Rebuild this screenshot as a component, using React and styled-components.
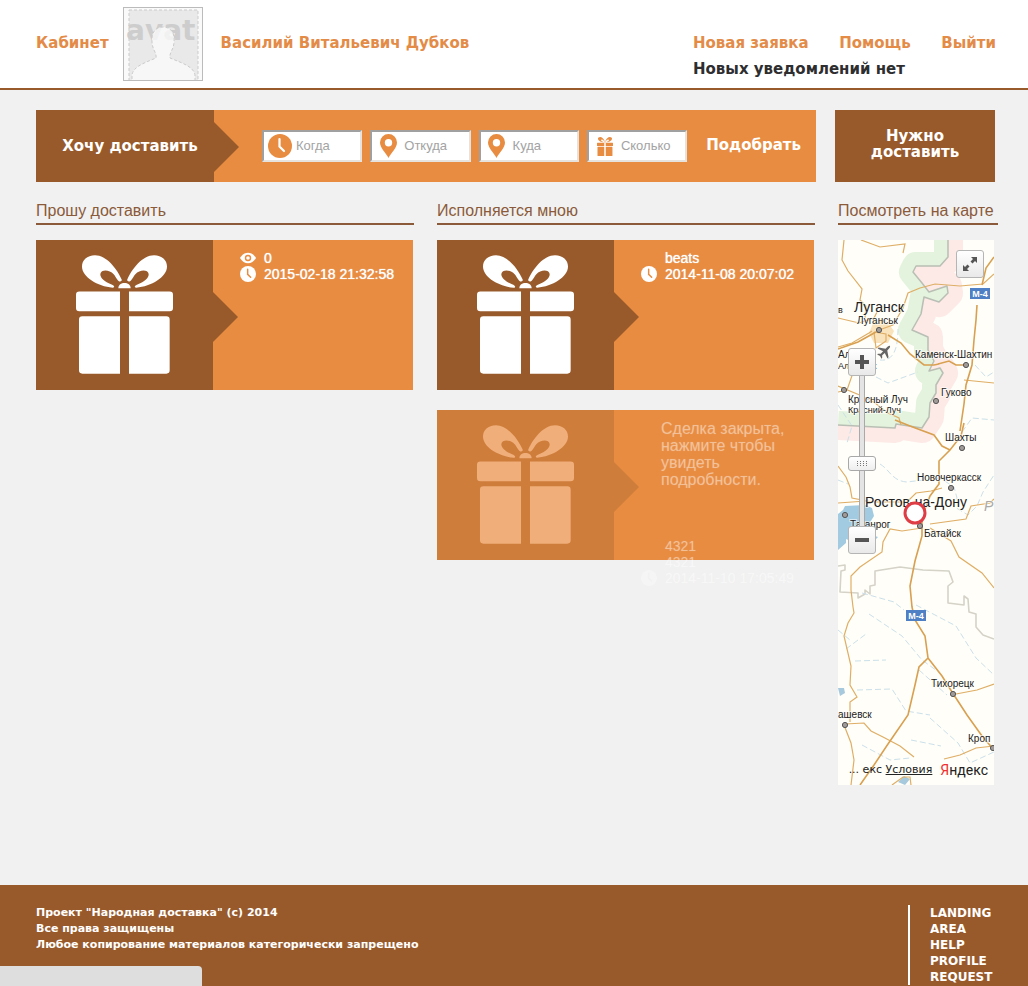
import React from "react";
import styled, { createGlobalStyle } from "styled-components";

const color = {
  brown: "#995a2b",
  orange: "#e88c41",
  link: "#e38b47",
  heading: "#8a5a3a",
  page: "#f1f1f1",
};
const display = `"DejaVu Sans", Verdana, sans-serif`;
const body = `"Liberation Sans", Arial, sans-serif`;

const GlobalStyle = createGlobalStyle`
  *, *::before, *::after { box-sizing: border-box; }
  body { margin: 0; background: ${color.page}; font-family: ${body}; }
  a { color: inherit; text-decoration: none; }
  ul { list-style: none; margin: 0; padding: 0; }
  h2, p { margin: 0; }
`;

const Page = styled.div`
  display: flex;
  flex-direction: column;
  min-height: 100vh;
`;

/* Header */
const Header = styled.header`
  display: flex;
  align-items: flex-start;
  min-height: 90px;
  padding: 0 32px 0 36px;
  background: #fff;
  border-bottom: 2px solid ${color.brown};
  font: bold 15px/26px ${display};
  color: ${color.link};
`;
const HeaderLink = styled.a`
  margin-top: 30px;
  white-space: nowrap;
`;
const Avatar = styled.svg`
  width: 80px;
  height: 74px;
  margin: 7px 18px 0 14px;
  border: 1px solid #bbb;
  background: #fafafa;
  flex: none;
`;
const HeaderRight = styled.div`
  width: 303px;
  margin: 30px 0 0 auto;
`;
const Nav = styled.nav`
  display: flex;
  justify-content: space-between;
  white-space: nowrap;
`;
const Notice = styled.p`
  color: #2e2e30;
`;

/* Search */
const Main = styled.main`
  flex: none;
  padding: 20px 30px 100px 36px;
`;
const SearchRow = styled.div`
  display: flex;
  gap: 19px;
  padding-right: 3px;
`;
const SearchBar = styled.form`
  display: flex;
  flex: 1;
  align-items: center;
  height: 72px;
  background: ${color.orange};
  font: bold 15px/16px ${display};
  color: #fff;
`;
const SearchLabel = styled.div`
  position: relative;
  display: flex;
  align-items: center;
  justify-content: center;
  width: 178px;
  height: 72px;
  padding-left: 10px;
  background: ${color.brown};
  white-space: nowrap;
  &::after {
    content: "";
    position: absolute;
    left: 100%;
    top: 12px;
    border: solid transparent;
    border-width: 25px 0 25px 25px;
    border-left-color: ${color.brown};
  }
`;
const Fields = styled.div`
  display: flex;
  flex: 1;
  gap: 8px;
  margin: 0 19px 0 48px;
`;
const Field = styled.label`
  display: flex;
  flex: 1;
  align-items: center;
  min-width: 0;
  height: 32px;
  padding-left: 4px;
  background: #fff;
  border: 2px solid;
  border-color: #a0a0a0 #e6e2de #e6e2de #a0a0a0;
  color: ${color.orange};
`;
const IconSlot = styled.span`
  display: flex;
  justify-content: center;
  align-items: center;
  flex: none;
  width: 24px;
  margin-right: 4px;
`;
const FieldInput = styled.input`
  width: 100%;
  min-width: 0;
  padding: 0;
  border: 0;
  outline: 0;
  background: transparent;
  font: 13px/16px ${body};
  color: #444;
  &::placeholder { color: #a3a3a3; opacity: 1; }
`;
const SubmitButton = styled.button`
  margin-right: 15px;
  padding: 0 0 2px;
  border: 0;
  background: none;
  font: inherit;
  color: inherit;
`;
const NeedButton = styled.button`
  width: 160px;
  height: 72px;
  padding: 0 20px 4px;
  border: 0;
  background: ${color.brown};
  font: bold 15px/16px ${display};
  color: #fff;
`;

/* Columns */
const Columns = styled.div`
  display: grid;
  grid-template-columns: 1fr 1fr 160px;
  gap: 23px;
  align-items: start;
  margin-top: 18px;
`;
const Title = styled.h2`
  height: 25px;
  margin-bottom: 15px;
  border-bottom: 2px solid ${color.heading};
  font: 16px/22px ${body};
  color: ${color.heading};
  white-space: nowrap;
`;
const CardList = styled.ul`
  display: grid;
  gap: 20px;
  padding-right: 1px;
`;
const Card = styled.li`
  display: flex;
  height: 150px;
  background: ${color.orange};
  color: ${(p) => (p.$closed ? "rgba(255,255,255,.3)" : "#fff")};
`;
const CardPicture = styled.div`
  --side: ${(p) => (p.$closed ? "#ce7d3a" : color.brown)};
  position: relative;
  flex: none;
  display: flex;
  justify-content: center;
  width: 177px;
  padding-top: 15px;
  background: var(--side);
  color: ${(p) => (p.$closed ? "#f0ae7b" : "#fff")};
  &::after {
    content: "";
    position: absolute;
    left: 100%;
    top: 52px;
    border: solid transparent;
    border-width: 25px 0 25px 25px;
    border-left-color: var(--side);
  }
`;
const CardInfo = styled.div`
  flex: 1;
  min-width: 0;
  padding: 10px 10px 0 27px;
`;
const ClosedNote = styled.p`
  width: 140px;
  margin: 0 0 50px 20px;
  font: 16px/17px ${body};
  text-shadow: 0 0 1px currentColor;
`;
const InfoRow = styled.div`
  display: grid;
  grid-template-columns: 16px 1fr;
  column-gap: 8px;
  align-items: center;
  height: 16px;
  font: 14px/16px ${body};
  text-shadow: 0 0 1px currentColor;
  white-space: nowrap;
`;
const InfoText = styled.span`
  grid-column: 2;
`;

/* Map */
const MapPanel = styled.div`
  position: relative;
  width: 156px;
  height: 545px;
  overflow: hidden;
  background: #fffef8;
`;
const MapDrawing = styled.svg`
  display: block;
`;
const MapButton = styled.button`
  position: absolute;
  left: ${(p) => p.$x}px;
  top: ${(p) => p.$y}px;
  display: flex;
  align-items: center;
  justify-content: center;
  width: 28px;
  height: 28px;
  padding: 0;
  border: 1px solid #b5b5b5;
  border-radius: 3px;
  background: linear-gradient(#fff, #e9e9e9);
  color: #555;
`;
const ZoomRange = styled.input`
  position: absolute;
  left: 10px;
  top: 135px;
  width: 28px;
  height: 153px;
  margin: 0;
  appearance: none;
  writing-mode: vertical-lr;
  direction: rtl;
  background: linear-gradient(90deg, transparent 11px, #a9a9a9 11px 12px, #e4e4e4 12px 16px, #a9a9a9 16px 17px, transparent 17px);
  &::-webkit-slider-thumb {
    appearance: none;
    width: 28px;
    height: 15px;
    border: 1px solid #a8a8a8;
    border-radius: 3px;
    background:
      repeating-linear-gradient(90deg, #777 0 1px, transparent 1px 3px) 8px 4px / 11px 1px no-repeat,
      repeating-linear-gradient(90deg, #777 0 1px, transparent 1px 3px) 8px 6px / 11px 1px no-repeat,
      repeating-linear-gradient(90deg, #777 0 1px, transparent 1px 3px) 8px 8px / 11px 1px no-repeat,
      linear-gradient(#fff, #eee);
  }
`;
const MapCredits = styled.div`
  position: absolute;
  right: 6px;
  bottom: 6px;
  display: flex;
  align-items: center;
  gap: 8px;
  font: 11px/18px ${display};
  color: #222;
  white-space: nowrap;
`;
const TermsLink = styled.a`
  text-decoration: underline;
`;
const YandexLink = styled.a`
  font: 14px/18px Roboto, ${body};
`;
const RedLetter = styled.span`
  color: #f02f2f;
`;

/* Footer */
const Footer = styled.footer`
  display: flex;
  flex: 1;
  justify-content: space-between;
  align-items: flex-start;
  padding: 20px 32px 1px 36px;
  background: ${color.brown};
  font: bold 12px/16px ${display};
  color: #fff;
`;
const Copyright = styled.div`
  font-size: 11px;
`;
const FooterLinks = styled.ul`
  width: 88px;
  padding-left: 20px;
  border-left: 2px solid #fff;
`;
const StatusBubble = styled.div`
  position: fixed;
  left: 0;
  bottom: 0;
  width: 202px;
  height: 20px;
  background: #dedede;
  border-top-right-radius: 4px;
`;

const Bow = () => (
  <path d="M279 150C264 115 232 75 198 75C174 75 159 90 159 109C159 141 206 169 251 173C259 171 256 166 246 162C228 155 213 143 214 131C216 117 241 117 254 132C263 143 266 154 274 154Z" />
);
const Gift = ({ width, height }) => (
  <svg width={width} height={height} viewBox="141 74 291 359" preserveAspectRatio="none" fill="currentColor" aria-hidden="true">
    <Bow />
    <g transform="translate(573 0) scale(-1 1)"><Bow /></g>
    <path d="M268 174C268 153 305 153 305 174Z" />
    <path d="M273 184H151Q141 184 141 194V234Q141 244 151 244H273ZM300 184H422Q432 184 432 194V234Q432 244 422 244H300Z" />
    <path d="M273 259H160Q150 259 150 269V422Q150 432 160 432H273ZM300 259H412Q422 259 422 269V422Q422 432 412 432H300Z" />
  </svg>
);
const Clock = ({ size, hand = color.orange }) => (
  <svg width={size} height={size} viewBox="0 0 24 24" aria-hidden="true">
    <circle cx="12" cy="12" r="12" fill="currentColor" />
    <path d="M11.500 5V12.500L16 17" fill="none" stroke={hand} strokeWidth="2.200" strokeLinecap="round" />
  </svg>
);
const Pin = () => (
  <svg width="17" height="24" viewBox="0 0 17 24" aria-hidden="true">
    <path fillRule="evenodd" fill="currentColor" d="M8.500 0A8.500 8.500 0 0 0 0 8.500C0 14 6 19 8.500 24C11 19 17 14 17 8.500A8.500 8.500 0 0 0 8.500 0ZM8.500 5A3.700 3.700 0 1 1 8.500 12.400A3.700 3.700 0 1 1 8.500 5Z" />
  </svg>
);
const Eye = () => (
  <svg width="16" height="16" viewBox="0 0 16 16" aria-hidden="true">
    <path d="M0 8C4 1 12 1 16 8C12 15 4 15 0 8Z" fill="currentColor" />
    <circle cx="8" cy="8" r="2.500" fill="none" stroke={color.orange} strokeWidth="1.400" />
  </svg>
);

const infoIcons = {
  eye: <Eye />,
  clock: <Clock size={16} />,
  clockFaded: <Clock size={16} hand={color.page} />,
};

function DeliveryCard({ closed, rows }) {
  return (
    <Card $closed={closed}>
      <CardPicture $closed={closed}><Gift width={97} height={119} /></CardPicture>
      <CardInfo>
        {closed && <ClosedNote>Сделка закрыта, нажмите чтобы увидеть подробности.</ClosedNote>}
        {rows.map(([icon, text], i) => (
          <InfoRow key={i}>{infoIcons[icon]}<InfoText>{text}</InfoText></InfoRow>
        ))}
      </CardInfo>
    </Card>
  );
}

const border = "M110 0V17L102 26L78 26L75 32L84 43L91 52L109 46L110 53L101 62L86 57L83 74L74 90L90 97V110L96 121L91 131L102 128L105 133L98 145V153L92 163L91 177L84 188L58 184L57 188L0 185";

const cities = [
  [41, 90], [6, 150], [128, 125], [98, 161], [124, 208], [113, 248],
  [7, 275], [82, 286], [115, 454], [7, 485], [155, 508],
];
const labels = [
  [16, 72, 14, "Луганск"], [19, 84, 10, "Луганськ"], [0, 118, 10, "Алчевск"], [0, 129, 9, "Алчевськ"],
  [77, 118, 10, "Каменск-Шахтин"], [103, 156, 10, "Гуково"], [10, 163, 10, "Красный Луч"], [10, 173, 9, "Красний-Луч"],
  [107, 201, 10, "Шахты"], [79, 241, 10, "Новочеркасск"], [27, 267, 14, "Ростов-на-Дону"],
  [12, 288, 10, "Таганрог"], [86, 297, 10, "Батайск"], [93, 447, 10, "Тихорецк"],
  [0, 478, 10, "ашевск"], [130, 502, 10, "Кроп"], [0, 73, 9, "в"],
];

function Region() {
  return (
    <MapDrawing width="156" height="545" viewBox="0 0 156 545" role="img" aria-label="Карта">
      <clipPath id="east"><path d={`${border}V545H156V0Z`} /></clipPath>
      {/* border with a green belt to the west and a pink one to the east */}
      <g fill="none" strokeLinejoin="round">
        <path d={border} stroke="#e3f3dd" strokeWidth="28" />
        <path d={`${border}V545H156V0Z`} fill="#fffef8" />
        <path d={border} stroke="#fdeae7" strokeWidth="30" clipPath="url(#east)" />
        <path d={border} stroke="#b9bfb4" strokeWidth="1.500" />
        <path d="M0 326L7 325V330L3 331L2 352L20 353V358L27 354V350L32 354V346L37 345V331L62 327L85 330L111 331L115 342L110 346V363L126 365V356L130 359L131 372L138 374V387L145 395L156 399" stroke="#d5d3c8" strokeWidth="1.600" />
      </g>
      <path d="M0 274L5 270L7 266L27 265L34 268L36 276L31 284L34 288V295L40 297L37 300L22 305L8 299V303L0 310Z" fill="#a2cbe2" />
      <path d="M36 81L47 79L56 91L50 103L36 103L31 93Z" fill="#f9e3bc" />
      {/* rivers */}
      <g fill="none" stroke="#cbe0ea" strokeWidth="1" strokeDasharray="6 3">
        <path d="M42 224C52 230 54 241 69 242L102 238L116 247L119 258L115 266L130 275L139 266L145 252L156 235" />
        <path d="M38 137L50 143L80 132M60 89C60 105 57 122 42 120M137 125L148 137L156 132M124 192L134 178L156 180" />
        <path d="M31 374L64 396L84 420L102 433M78 365L118 386L138 418L156 435M17 421L48 420M19 450L54 449L68 471L92 475M8 409L28 394M92 478L120 503L132 523L156 512M24 505L52 520L72 518M24 353L56 362L66 370" />
        <path d="M0 165L14 186L9 203M0 240L10 244M0 390L12 400M73 500L103 506M81 430L109 455" />
      </g>
      <path d="M0 448L6 448L7 453L2 456ZM60 542L66 536L72 539L67 545Z" fill="#a7c9dd" />
      {/* secondary roads */}
      <g fill="none" stroke="#dfae66" strokeWidth="1.200">
        <path d="M6 0L4 20L10 31L24 49L22 60L28 66L27 78M23 0L42 7L67 4L65 13M0 107L14 103L31 93L34 91M0 152L9 150L16 130L17 115M0 78L21 83L36 78L39 72M41 90L55 85L65 68L70 53L82 48L97 44L122 46L145 44L156 34M36 92L38 108L48 101V94L36 92M0 146L24 156L37 163L50 173L61 178L63 185" />
        <path d="M126 140L156 143M0 226L8 237L12 247L14 258L34 262L69 262L78 253L93 251L104 248M0 263L28 261M92 284L128 279L133 266L152 263L156 259M84 288L64 291L52 289L45 302L44 312L22 327L13 336V350L15 367L16 373L10 383L6 396L13 426L12 445L19 457L12 462V482" />
        <path d="M92 288L113 301L121 317L144 333L156 348M7 484L26 483L33 491L45 497L62 506L76 517M118 454L139 450L156 444M106 519L122 515L138 508L156 506M6 485L13 503L16 520L13 545M54 545L65 537L72 537L73 545" />
      </g>
      {/* M-4 motorway and main roads */}
      <g fill="none" stroke="#d8a050" strokeWidth="1.600">
        <path d="M156 17L148 28L144 45M139 65L138 80L136 100L134 125L128 145L126 164L122 191M126 183L123 196L112 210L101 221V244L92 256L84 277L84 296L77 321L72 346L74 367L77 380L87 396L90 418L81 427L77 445L70 475L50 504L36 525L22 545M90 418L104 436L114 452L129 475L144 496L156 510" />
        <path d="M50 95L63 103L72 114L86 125L96 125L101 124M0 109L20 102L38 92M100 124L111 121L118 125H128M57 180L72 186L96 195L104 206L112 210" />
      </g>
      {/* airport */}
      <g transform="translate(47 111) rotate(45)" fill="#666">
        <path d="M0 -7C1 -7 1.200 -5 1.200 -2L7 2V3.500L1.200 1.500L1 5L3 7V8L0 7L-3 8V7L-1 5L-1.200 1.500L-7 3.500V2L-1.200 -2C-1.200 -5 -1 -7 0 -7Z" />
      </g>
      {cities.map(([x, y]) => (
        <circle key={`${x}-${y}`} cx={x} cy={y} r="2.600" fill="#a09a98" stroke="#555" strokeWidth="1" />
      ))}
      <g fill="#222" stroke="#fffef8" strokeWidth="2" strokeOpacity=".6" paintOrder="stroke" fontFamily="Liberation Sans, Arial, sans-serif">
        {labels.map(([x, y, size, text]) => <text key={text} x={x} y={y} fontSize={size}>{text}</text>)}
        <text x="146" y="271" fontSize="14" fontStyle="italic" fill="#aaa">Р</text>
      </g>
      <g fill="#4f7fc4">
        <rect x="132" y="48" width="20" height="11" />
        <rect x="68" y="370" width="20" height="11" />
      </g>
      <g fill="#fff" fontFamily="Liberation Sans, Arial, sans-serif" fontSize="9" fontWeight="bold" textAnchor="middle">
        <text x="142" y="57">М-4</text>
        <text x="78" y="379">М-4</text>
      </g>
      <circle cx="77" cy="273" r="10" fill="#fff" stroke="#df3d46" strokeWidth="3" />
    </MapDrawing>
  );
}

const fields = [
  { name: "when", placeholder: "Когда", icon: <Clock size={24} hand="#fff" /> },
  { name: "from", placeholder: "Откуда", icon: <Pin /> },
  { name: "to", placeholder: "Куда", icon: <Pin /> },
  { name: "amount", placeholder: "Сколько", icon: <Gift width={16} height={19} /> },
];

export default function App() {
  return (
    <Page>
      <GlobalStyle />
      <Header>
        <HeaderLink href="#cabinet">Кабинет</HeaderLink>
        <Avatar viewBox="0 0 78 72" role="img" aria-label="Аватар">
          <rect x="5" y="2" width="69" height="74" fill="#e9e9e9" stroke="#cbcbcb" strokeDasharray="3 2" />
          <text x="2" y="32" fontFamily="DejaVu Sans, sans-serif" fontWeight="bold" fontSize="28" fill="#cdcdcd">avat</text>
          <path d="M8 76V68C8 59 20 55 32 50C33 45 28 41 28 34C27 24 32 19 39 19C47 19 51 25 50 34C50 41 45 45 46 50C58 55 71 59 71 68V76Z" fill="#fafafa" fillOpacity=".8" stroke="#cbcbcb" strokeDasharray="3 2" />
        </Avatar>
        <HeaderLink href="#profile">Василий Витальевич Дубков</HeaderLink>
        <HeaderRight>
          <Nav>
            <a href="#new">Новая заявка</a>
            <a href="#help">Помощь</a>
            <a href="#exit">Выйти</a>
          </Nav>
          <Notice>Новых уведомлений нет</Notice>
        </HeaderRight>
      </Header>

      <Main>
        <SearchRow>
          <SearchBar onSubmit={(e) => e.preventDefault()}>
            <SearchLabel>Хочу доставить</SearchLabel>
            <Fields>
              {fields.map((f) => (
                <Field key={f.name}>
                  <IconSlot>{f.icon}</IconSlot>
                  <FieldInput name={f.name} placeholder={f.placeholder} aria-label={f.placeholder} />
                </Field>
              ))}
            </Fields>
            <SubmitButton type="submit">Подобрать</SubmitButton>
          </SearchBar>
          <NeedButton type="button">Нужно доставить</NeedButton>
        </SearchRow>

        <Columns>
          <section>
            <Title>Прошу доставить</Title>
            <CardList>
              <DeliveryCard rows={[["eye", "0"], ["clock", "2015-02-18 21:32:58"]]} />
            </CardList>
          </section>
          <section>
            <Title>Исполняется мною</Title>
            <CardList>
              <DeliveryCard rows={[["", "beats"], ["clock", "2014-11-08 20:07:02"]]} />
              <DeliveryCard closed rows={[["", "4321"], ["", "4321"], ["clockFaded", "2014-11-10 17:05:49"]]} />
            </CardList>
          </section>
          <section>
            <Title>Посмотреть на карте</Title>
            <MapPanel>
              <Region />
              <MapButton $x={118} $y={10} type="button" aria-label="Развернуть карту">
                <svg width="16" height="16" viewBox="0 0 16 16" fill="currentColor">
                  <path d="M9 1H15V7L13 5L10.500 7.500L8.500 5.500L11 3ZM7 15H1V9L3 11L5.500 8.500L7.500 10.500L5 13Z" />
                </svg>
              </MapButton>
              <ZoomRange type="range" min="0" max="100" defaultValue="41" aria-label="Масштаб" />
              <MapButton $x={10} $y={108} type="button" aria-label="Приблизить">
                <svg width="14" height="14" viewBox="0 0 14 14" fill="currentColor"><path d="M5 0H9V5H14V9H9V14H5V9H0V5H5Z" /></svg>
              </MapButton>
              <MapButton $x={10} $y={286} type="button" aria-label="Отдалить">
                <svg width="14" height="14" viewBox="0 0 14 14" fill="currentColor"><path d="M0 5H14V9H0Z" /></svg>
              </MapButton>
              <MapCredits>
                <span>... екс <TermsLink href="#terms">Условия</TermsLink></span>
                <YandexLink href="#yandex"><RedLetter>Я</RedLetter>ндекс</YandexLink>
              </MapCredits>
            </MapPanel>
          </section>
        </Columns>
      </Main>

      <Footer>
        <Copyright>
          <p>Проект "Народная доставка" (с) 2014</p>
          <p>Все права защищены</p>
          <p>Любое копирование материалов категорически запрещено</p>
        </Copyright>
        <FooterLinks>
          <li><a href="#landing">LANDING</a></li>
          <li><a href="#area">AREA</a></li>
          <li><a href="#help-page">HELP</a></li>
          <li><a href="#profile-page">PROFILE</a></li>
          <li><a href="#request">REQUEST</a></li>
        </FooterLinks>
      </Footer>
      <StatusBubble />
    </Page>
  );
}
